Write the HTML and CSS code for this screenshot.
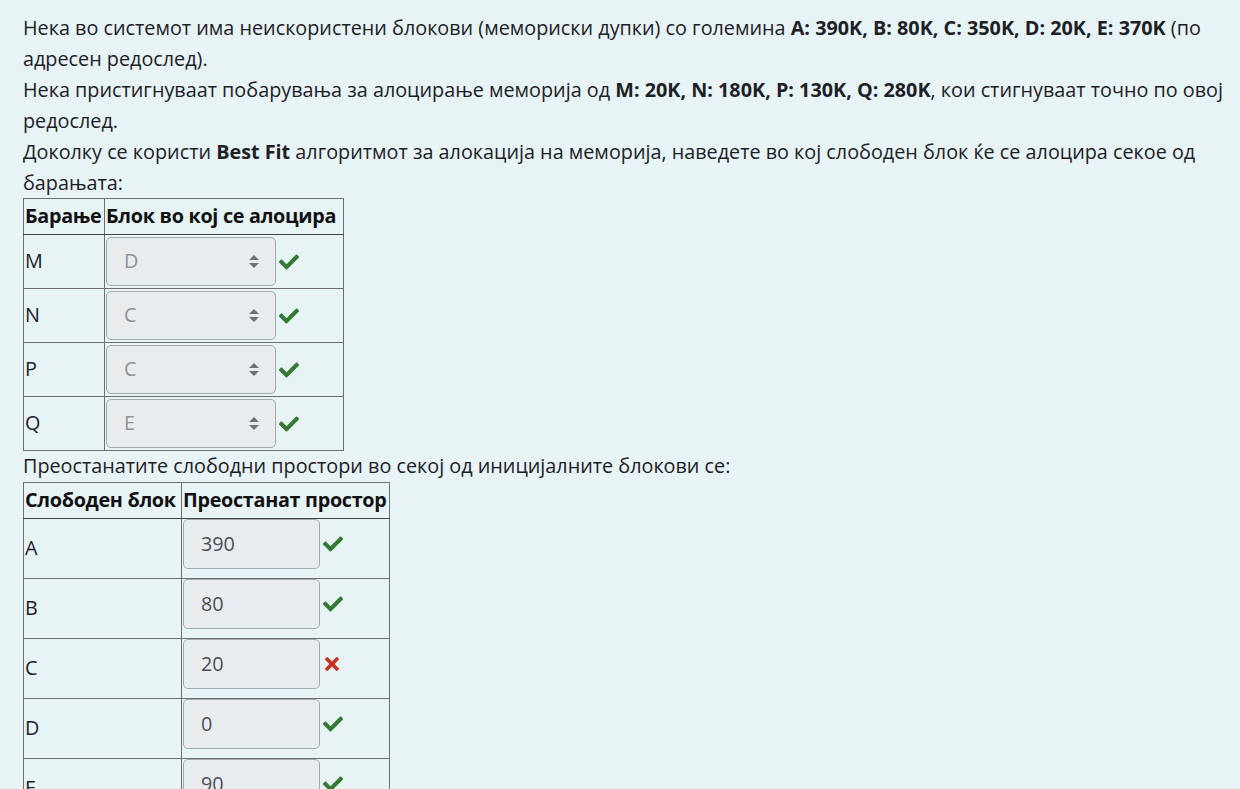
FILE: index.html
```html
<!DOCTYPE html>
<html lang="mk">
<head>
<meta charset="utf-8">
<title>Best Fit</title>
<link rel="stylesheet" href="styles.css">
</head>
<body>
<div class="formulation">
  <p class="qtext">Нека во системот има неискористени блокови (мемориски дупки) со големина <b>A: 390K, B: 80K, C: 350K, D: 20K, E: 370K</b> (по адресен редослед).<br>Нека пристигнуваат побарувања за алоцирање меморија од <b>M: 20K, N: 180K, P: 130K, Q: 280K</b>, кои стигнуваат точно по овој редослед.<br>Доколку се користи <b>Best Fit</b> алгоритмот за алокација на меморија, наведете во кој слободен блок ќе се алоцира секое од барањата:</p>
  <table class="grid t1">
    <colgroup><col class="t1c1"><col class="t1c2"></colgroup>
    <tr class="head"><th>Барање</th><th>Блок во кој се алоцира</th></tr>
    <tr class="r1"><td class="lbl">M</td><td class="ctl"><span class="sel"><span class="val">D</span><svg class="arr" viewBox="0 0 10 13"><path d="M5 0L10 5H0z M5 13L0 8h10z" fill="#6c7178"/></svg></span><svg class="ok" viewBox="0 0 512 512"><path d="M173.898 439.404l-166.4-166.4c-9.997-9.997-9.997-26.206 0-36.204l36.203-36.204c9.997-9.998 26.207-9.998 36.204 0L192 312.69 432.095 72.596c9.997-9.997 26.207-9.997 36.204 0l36.203 36.204c9.997 9.997 9.997 26.206 0 36.204l-294.4 294.401c-9.998 9.997-26.207 9.997-36.204-.001z"/></svg></td></tr>
    <tr class="r1"><td class="lbl">N</td><td class="ctl"><span class="sel"><span class="val">C</span><svg class="arr" viewBox="0 0 10 13"><path d="M5 0L10 5H0z M5 13L0 8h10z" fill="#6c7178"/></svg></span><svg class="ok" viewBox="0 0 512 512"><path d="M173.898 439.404l-166.4-166.4c-9.997-9.997-9.997-26.206 0-36.204l36.203-36.204c9.997-9.998 26.207-9.998 36.204 0L192 312.69 432.095 72.596c9.997-9.997 26.207-9.997 36.204 0l36.203 36.204c9.997 9.997 9.997 26.206 0 36.204l-294.4 294.401c-9.998 9.997-26.207 9.997-36.204-.001z"/></svg></td></tr>
    <tr class="r1"><td class="lbl">P</td><td class="ctl"><span class="sel"><span class="val">C</span><svg class="arr" viewBox="0 0 10 13"><path d="M5 0L10 5H0z M5 13L0 8h10z" fill="#6c7178"/></svg></span><svg class="ok" viewBox="0 0 512 512"><path d="M173.898 439.404l-166.4-166.4c-9.997-9.997-9.997-26.206 0-36.204l36.203-36.204c9.997-9.998 26.207-9.998 36.204 0L192 312.69 432.095 72.596c9.997-9.997 26.207-9.997 36.204 0l36.203 36.204c9.997 9.997 9.997 26.206 0 36.204l-294.4 294.401c-9.998 9.997-26.207 9.997-36.204-.001z"/></svg></td></tr>
    <tr class="r1"><td class="lbl">Q</td><td class="ctl"><span class="sel"><span class="val">E</span><svg class="arr" viewBox="0 0 10 13"><path d="M5 0L10 5H0z M5 13L0 8h10z" fill="#6c7178"/></svg></span><svg class="ok" viewBox="0 0 512 512"><path d="M173.898 439.404l-166.4-166.4c-9.997-9.997-9.997-26.206 0-36.204l36.203-36.204c9.997-9.998 26.207-9.998 36.204 0L192 312.69 432.095 72.596c9.997-9.997 26.207-9.997 36.204 0l36.203 36.204c9.997 9.997 9.997 26.206 0 36.204l-294.4 294.401c-9.998 9.997-26.207 9.997-36.204-.001z"/></svg></td></tr>
  </table>
  <p class="qtext">Преостанатите слободни простори во секој од иницијалните блокови се:</p>
  <table class="grid t2">
    <colgroup><col class="t2c1"><col class="t2c2"></colgroup>
    <tr class="head"><th>Слободен блок</th><th>Преостанат простор</th></tr>
    <tr class="r2"><td class="lbl">A</td><td class="ctl2"><span class="inp">390</span><svg class="ok" viewBox="0 0 512 512"><path d="M173.898 439.404l-166.4-166.4c-9.997-9.997-9.997-26.206 0-36.204l36.203-36.204c9.997-9.998 26.207-9.998 36.204 0L192 312.69 432.095 72.596c9.997-9.997 26.207-9.997 36.204 0l36.203 36.204c9.997 9.997 9.997 26.206 0 36.204l-294.4 294.401c-9.998 9.997-26.207 9.997-36.204-.001z"/></svg></td></tr>
    <tr class="r2"><td class="lbl">B</td><td class="ctl2"><span class="inp">80</span><svg class="ok" viewBox="0 0 512 512"><path d="M173.898 439.404l-166.4-166.4c-9.997-9.997-9.997-26.206 0-36.204l36.203-36.204c9.997-9.998 26.207-9.998 36.204 0L192 312.69 432.095 72.596c9.997-9.997 26.207-9.997 36.204 0l36.203 36.204c9.997 9.997 9.997 26.206 0 36.204l-294.4 294.401c-9.998 9.997-26.207 9.997-36.204-.001z"/></svg></td></tr>
    <tr class="r2"><td class="lbl">C</td><td class="ctl2"><span class="inp">20</span><svg class="bad" viewBox="0 0 352 512"><path d="M242.72 256l100.07-100.07c12.28-12.28 12.28-32.19 0-44.48l-22.24-22.24c-12.28-12.28-32.19-12.28-44.48 0L176 189.28 75.930 89.21c-12.28-12.28-32.19-12.28-44.48 0L9.21 111.45c-12.28 12.28-12.28 32.19 0 44.48L109.28 256 9.21 356.07c-12.28 12.28-12.28 32.19 0 44.48l22.24 22.24c12.280 12.28 32.2 12.28 44.48 0L176 322.72l100.07 100.07c12.28 12.28 32.2 12.28 44.48 0l22.24-22.24c12.28-12.28 12.28-32.19 0-44.48L242.72 256z"/></svg></td></tr>
    <tr class="r2"><td class="lbl">D</td><td class="ctl2"><span class="inp">0</span><svg class="ok" viewBox="0 0 512 512"><path d="M173.898 439.404l-166.4-166.4c-9.997-9.997-9.997-26.206 0-36.204l36.203-36.204c9.997-9.998 26.207-9.998 36.204 0L192 312.69 432.095 72.596c9.997-9.997 26.207-9.997 36.204 0l36.203 36.204c9.997 9.997 9.997 26.206 0 36.204l-294.4 294.401c-9.998 9.997-26.207 9.997-36.204-.001z"/></svg></td></tr>
    <tr class="r2"><td class="lbl">E</td><td class="ctl2"><span class="inp">90</span><svg class="ok" viewBox="0 0 512 512"><path d="M173.898 439.404l-166.4-166.4c-9.997-9.997-9.997-26.206 0-36.204l36.203-36.204c9.997-9.998 26.207-9.998 36.204 0L192 312.69 432.095 72.596c9.997-9.997 26.207-9.997 36.204 0l36.203 36.204c9.997 9.997 9.997 26.206 0 36.204l-294.4 294.401c-9.998 9.997-26.207 9.997-36.204-.001z"/></svg></td></tr>
  </table>
</div>
</body>
</html>
```

FILE: styles.css
```css
html, body {
  margin: 0;
  padding: 0;
  background: #e7f3f5;
}
body {
  font-family: "Open Sans", "Noto Sans", sans-serif;
  font-size: 19.8px;
  line-height: 30.9px;
  color: #1d2125;
}
.formulation {
  padding: 13px 8px 0 23px;
}
.qtext {
  margin: 0;
}
.qtext b {
  font-weight: 700;
}
.grid {
  border-collapse: collapse;
  table-layout: fixed;
  border: 1px solid #5f5f5f;
}
.grid th,
.grid td {
  border: 1px solid #6e6e6e;
  padding: 0 1px;
  text-align: left;
}
.grid th {
  font-weight: 700;
  color: #111;
  white-space: nowrap;
  letter-spacing: -0.3px;
  vertical-align: middle;
}
.head {
  height: 36px;
}
.head th {
  border-bottom-color: #444;
}
.t1 { width: 320px; }
.t1c1 { width: 81px; }
.t1c2 { width: 239px; }
.t2 { width: 366px; }
.t2c1 { width: 158px; }
.t2c2 { width: 208px; }
.r1 { height: 54px; }
.r2 { height: 60px; }
.lbl {
  vertical-align: middle;
}
.ctl {
  vertical-align: middle;
  padding: 0;
}
.ctl2 {
  vertical-align: top;
  padding: 2px 0 0 2px;
}
.sel {
  display: inline-flex;
  align-items: center;
  justify-content: space-between;
  box-sizing: border-box;
  width: 170px;
  height: 49px;
  padding: 0 16px 0 17px;
  background: #e9ecef;
  border: 1px solid #a3a8ae;
  border-radius: 5px;
  color: #8e9297;
  vertical-align: middle;
}
.arr {
  width: 10px;
  height: 13px;
}
.inp {
  display: inline-flex;
  align-items: center;
  box-sizing: border-box;
  width: 137px;
  height: 50px;
  padding: 0 0 0 17px;
  background: #e9ecef;
  border: 1px solid #a3a8ae;
  border-radius: 5px;
  color: #495057;
  vertical-align: middle;
}
.ok {
  width: 20px;
  height: 20px;
  fill: #357a32;
  vertical-align: middle;
  margin-left: 3px;
}
.bad {
  width: 14px;
  height: 20px;
  fill: #ca3120;
  vertical-align: middle;
  margin-left: 5px;
}
```
